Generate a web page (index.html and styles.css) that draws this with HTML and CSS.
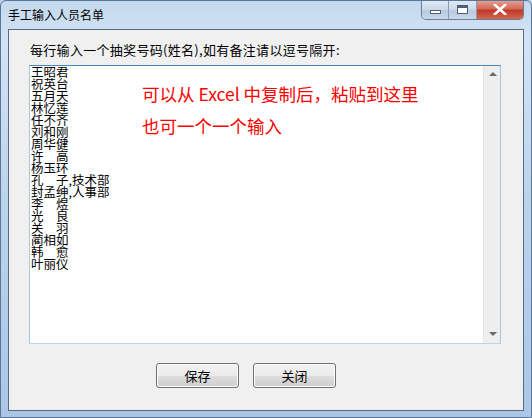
FILE: index.html
```html
<!DOCTYPE html>
<html lang="zh-CN">
<head>
  <meta charset="UTF-8" />
  <title>手工输入人员名单</title>
  <link rel="stylesheet" href="styles.css">
</head>
<body>
  <div class="window">
    <div class="titlebar">
      <span class="title">手工输入人员名单</span>
      <div class="controls">
        <span class="ctl min"><i class="min-bar"></i></span>
        <span class="ctl max"><i class="max-box"></i></span>
        <span class="ctl close">
          <svg width="14" height="11" viewBox="0 0 14 11"><path d="M2 1 L12 10 M12 1 L2 10" stroke="#ffffff" stroke-width="2.6" stroke-linecap="square"/></svg>
        </span>
      </div>
    </div>

    <div class="client">
      <p class="prompt">每行输入一个抽奖号码(姓名),如有备注请以逗号隔开:</p>

      <div class="editbox">
        <div class="names">王昭君
祝英台
五月天
林忆莲
任不齐
刘和刚
周华健
许　高
杨玉环
孔　子,技术部
封孟绅,人事部
李　煜
光　良
关　羽
蔺相如
韩　愈
叶丽仪</div>
        <div class="scrollbar">
          <span class="arrow up"></span>
          <span class="arrow down"></span>
        </div>
        <div class="hint">可以从 Excel 中复制后，粘贴到这里<br>也可一个一个输入</div>
      </div>

      <div class="buttons">
        <button class="btn">保存</button>
        <button class="btn">关闭</button>
      </div>
    </div>
  </div>
</body>
</html>
```

FILE: styles.css
```css
* { box-sizing: border-box; }

body {
  margin: 0;
  font-family: "Noto Sans CJK SC", "Noto Sans", sans-serif;
  background: #b9d1ea;
}

.window {
  width: 532px;
  height: 418px;
  display: flex;
  flex-direction: column;
  background: linear-gradient(to bottom, #c4d9ef 0, #d3e3f4 40px, #bcd3ec 200px, #aac7e6 100%);
  border: 1px solid #5a7799;
  border-radius: 6px 6px 0 0;
  overflow: hidden;
}

.titlebar {
  height: 28px;
  display: flex;
  justify-content: space-between;
  align-items: flex-start;
  padding-left: 7px;
}

.title {
  font-size: 12px;
  line-height: 28px;
  color: #000;
}

.controls {
  display: flex;
  margin-right: 7px;
  margin-top: -1px;
  border: 1px solid #6b7d93;
  border-top: none;
  border-radius: 0 0 5px 5px;
  overflow: hidden;
}

.ctl {
  height: 19px;
  display: flex;
  align-items: center;
  justify-content: center;
  background: linear-gradient(to bottom, #e3ecf6 0, #cbd9ea 50%, #b7c9de 51%, #c9d8ea 100%);
}

.ctl.min { width: 27px; border-right: 1px solid #8a9bb0; }
.ctl.max { width: 28px; border-right: 1px solid #8a9bb0; }
.ctl.close {
  width: 46px;
  background: linear-gradient(to bottom, #e8a395 0, #d36b59 45%, #c0392a 55%, #d5674f 100%);
}

.min-bar {
  width: 11px;
  height: 4px;
  margin-top: 5px;
  background: #fff;
  border: 1px solid #4f6073;
}

.max-box {
  width: 11px;
  height: 9px;
  border: 1px solid #4f6073;
  border-top-width: 3px;
  background: #fff;
  box-shadow: inset 0 0 0 1px #fff;
}

.client {
  flex: 1;
  margin: 0 7px 6px 7px;
  border: 1px solid #586b80;
  background: #f0f0f0;
  padding: 0 0 0 20px;
}

.prompt {
  margin: 12px 0 7px 1px;
  font-size: 13px;
  line-height: 16px;
  letter-spacing: 0.3px;
  color: #000;
}

.editbox {
  position: relative;
  width: 472px;
  height: 279px;
  background: #fff;
  border: 1px solid #a6c8e2;
  border-top-color: #4a86b8;
  border-bottom-color: #b6d6ec;
}

.names {
  white-space: pre;
  padding: 0 0 0 1px;
  font-size: 12.5px;
  line-height: 12px;
  color: #000;
}

.scrollbar {
  position: absolute;
  top: 0;
  right: 0;
  bottom: 0;
  width: 17px;
  background: #eeeeee;
  border-left: 1px solid #e4e4e4;
}

.arrow {
  position: absolute;
  left: 5px;
  width: 0;
  height: 0;
  border-left: 4px solid transparent;
  border-right: 4px solid transparent;
}

.arrow.up {
  top: 6px;
  border-bottom: 4px solid #6a6a6a;
}

.arrow.down {
  bottom: 7px;
  border-top: 4px solid #6a6a6a;
}

.hint {
  position: absolute;
  left: 112px;
  top: 12px;
  font-size: 17.5px;
  line-height: 32px;
  color: #ff0000;
}

.buttons {
  display: flex;
  gap: 14px;
  margin: 19px 0 0 127px;
}

.btn {
  width: 83px;
  height: 25px;
  padding: 0;
  font-family: inherit;
  font-size: 13px;
  color: #000;
  border: 1px solid #707070;
  border-radius: 3px;
  background: linear-gradient(to bottom, #f2f2f2 0, #ebebeb 50%, #dddddd 51%, #cfcfcf 100%);
  box-shadow: inset 0 0 0 1px #fcfcfc;
}
```
